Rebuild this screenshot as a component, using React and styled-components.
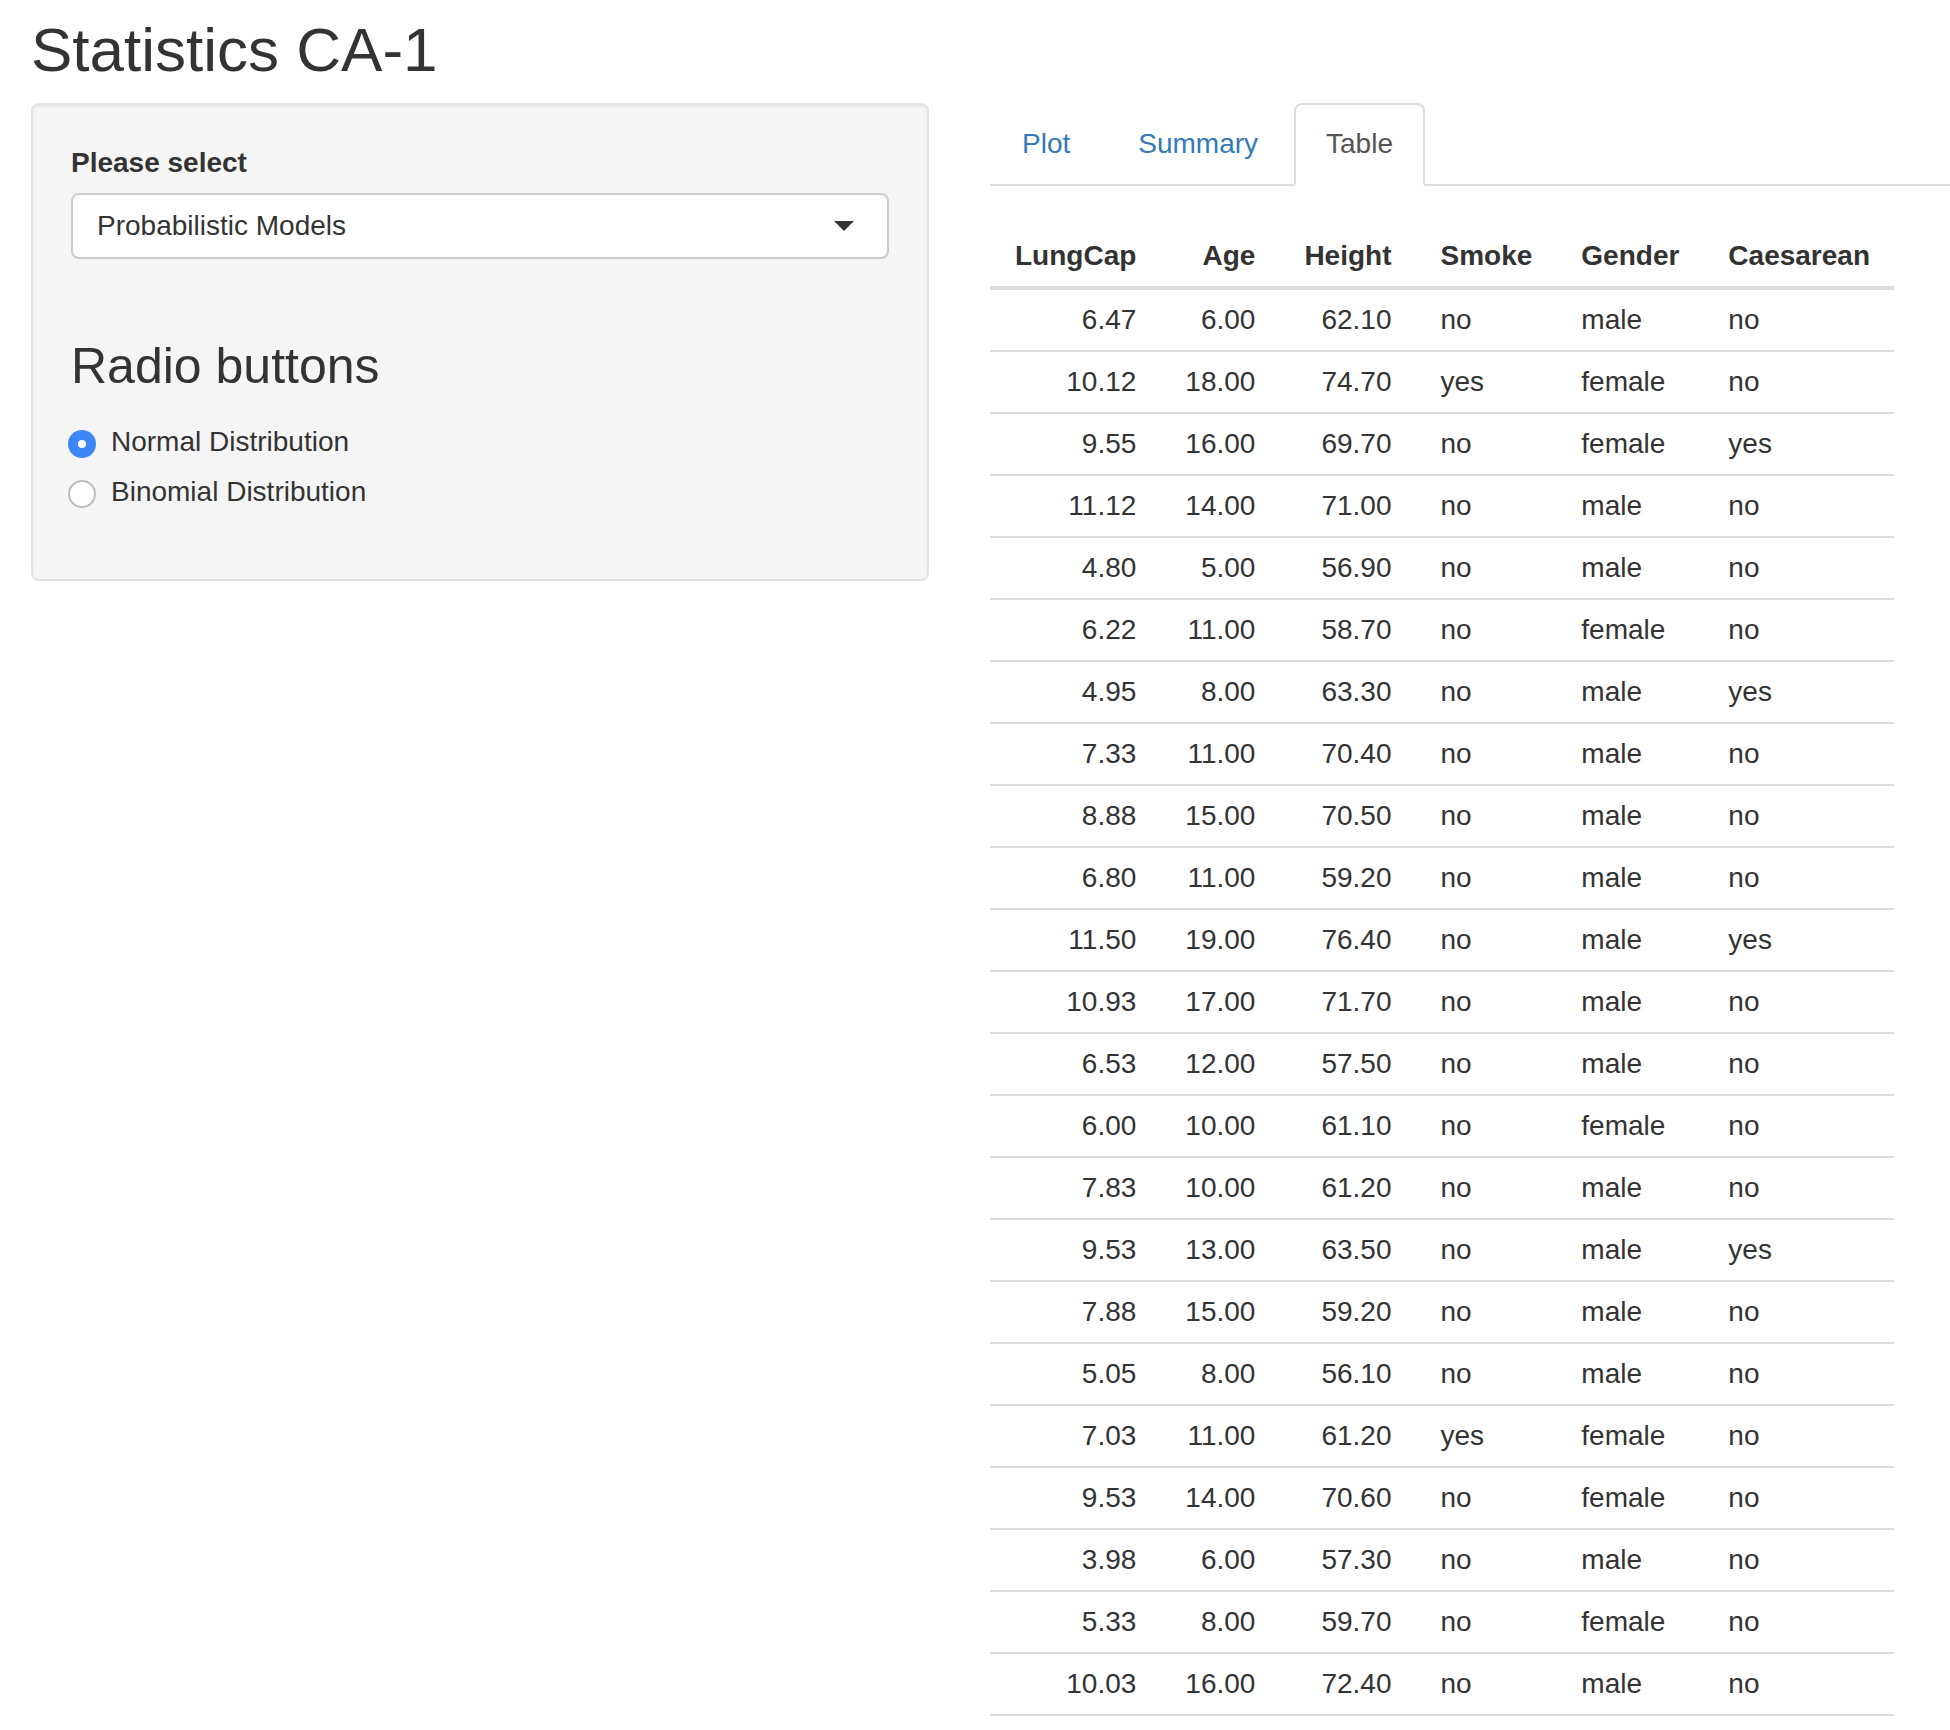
import styled, { createGlobalStyle } from "styled-components";
import { useState } from "react";

const rows = [
  ["6.47", "6.00", "62.10", "no", "male", "no"],
  ["10.12", "18.00", "74.70", "yes", "female", "no"],
  ["9.55", "16.00", "69.70", "no", "female", "yes"],
  ["11.12", "14.00", "71.00", "no", "male", "no"],
  ["4.80", "5.00", "56.90", "no", "male", "no"],
  ["6.22", "11.00", "58.70", "no", "female", "no"],
  ["4.95", "8.00", "63.30", "no", "male", "yes"],
  ["7.33", "11.00", "70.40", "no", "male", "no"],
  ["8.88", "15.00", "70.50", "no", "male", "no"],
  ["6.80", "11.00", "59.20", "no", "male", "no"],
  ["11.50", "19.00", "76.40", "no", "male", "yes"],
  ["10.93", "17.00", "71.70", "no", "male", "no"],
  ["6.53", "12.00", "57.50", "no", "male", "no"],
  ["6.00", "10.00", "61.10", "no", "female", "no"],
  ["7.83", "10.00", "61.20", "no", "male", "no"],
  ["9.53", "13.00", "63.50", "no", "male", "yes"],
  ["7.88", "15.00", "59.20", "no", "male", "no"],
  ["5.05", "8.00", "56.10", "no", "male", "no"],
  ["7.03", "11.00", "61.20", "yes", "female", "no"],
  ["9.53", "14.00", "70.60", "no", "female", "no"],
  ["3.98", "6.00", "57.30", "no", "male", "no"],
  ["5.33", "8.00", "59.70", "no", "female", "no"],
  ["10.03", "16.00", "72.40", "no", "male", "no"],
];

const columns = [
  { name: "LungCap", right: true },
  { name: "Age", right: true },
  { name: "Height", right: true },
  { name: "Smoke" },
  { name: "Gender" },
  { name: "Caesarean" },
];

const tabs = ["Plot", "Summary", "Table"];
const distributions = ["Normal Distribution", "Binomial Distribution"];

export default function App() {
  const [tab, setTab] = useState("Table");
  const [dist, setDist] = useState(distributions[0]);

  return (
    <>
      <GlobalStyle />
      <Page>
        <Title>Statistics CA-1</Title>
        <Layout>
          <Sidebar>
            <Label>Please select</Label>
            <Select>
              <span>Probabilistic Models</span>
              <svg width="20" height="10" viewBox="0 0 20 10">
                <path d="M0 0 L20 0 L10 10 Z" fill="#333" />
              </svg>
            </Select>
            <SectionTitle>Radio buttons</SectionTitle>
            <RadioGroup>
              {distributions.map((d) => (
                <RadioRow key={d} onClick={() => setDist(d)}>
                  <RadioDot checked={dist === d} />
                  {d}
                </RadioRow>
              ))}
            </RadioGroup>
          </Sidebar>
          <Main>
            <TabBar>
              {tabs.map((t) => (
                <Tab key={t} active={t === tab} onClick={() => setTab(t)}>
                  {t}
                </Tab>
              ))}
            </TabBar>
            <Table>
              <thead>
                <tr>
                  {columns.map((c) => (
                    <Th key={c.name} right={c.right}>{c.name}</Th>
                  ))}
                </tr>
              </thead>
              <tbody>
                {rows.map((r, i) => (
                  <tr key={i}>
                    {r.map((v, j) => (
                      <Td key={j} right={columns[j].right}>{v}</Td>
                    ))}
                  </tr>
                ))}
              </tbody>
            </Table>
          </Main>
        </Layout>
      </Page>
    </>
  );
}

const GlobalStyle = createGlobalStyle`
  html, body {
    margin: 0;
    padding: 0;
    background: #fff;
  }
  body {
    font-family: "Liberation Sans", Arial, Helvetica, sans-serif;
    font-size: 28px;
    line-height: 40px;
    color: #333;
  }
`;

const Page = styled.div`
  width: 1950px;
  height: 1730px;
  overflow: hidden;
  padding-left: 31px;
  box-sizing: border-box;
`;

const Title = styled.h2`
  margin: 16px 0 0 0;
  font-size: 62px;
  line-height: 68px;
  font-weight: 500;
  color: #333;
`;

const Layout = styled.div`
  display: flex;
  align-items: flex-start;
  gap: 61px;
  margin-top: 19px;
`;

const Sidebar = styled.div`
  width: 898px;
  box-sizing: border-box;
  background: #f5f5f5;
  border: 2px solid #e3e3e3;
  border-radius: 8px;
  box-shadow: inset 0 2px 2px rgba(0, 0, 0, 0.05);
  padding: 38px;
`;

const Label = styled.div`
  font-weight: 700;
  margin-bottom: 10px;
`;

const Select = styled.div`
  display: flex;
  align-items: center;
  justify-content: space-between;
  height: 66px;
  box-sizing: border-box;
  background: #fff;
  border: 2px solid #cccccc;
  border-radius: 8px;
  padding: 0 33px 0 24px;
  color: #333;
`;

const SectionTitle = styled.h3`
  margin: 80px 0 0 0;
  font-size: 50px;
  line-height: 55px;
  font-weight: 500;
`;

const RadioGroup = styled.div`
  display: flex;
  flex-direction: column;
  gap: 10px;
  margin: 28px 0 29px;
`;

const RadioRow = styled.label`
  display: flex;
  align-items: center;
  gap: 15px;
  margin-left: -3px;
  cursor: pointer;
`;

const RadioDot = styled.span`
  width: 28px;
  height: 28px;
  box-sizing: border-box;
  border-radius: 50%;
  margin-top: 4px;
  position: relative;
  background: ${(p) => (p.checked ? "#3b87f7" : "#fff")};
  border: ${(p) => (p.checked ? "none" : "2px solid #bdbdbd")};
  &::after {
    content: "";
    display: ${(p) => (p.checked ? "block" : "none")};
    position: absolute;
    left: 10px;
    top: 10px;
    width: 8px;
    height: 8px;
    border-radius: 50%;
    background: #fff;
  }
`;

const Main = styled.div`
  flex: 1;
  min-width: 0;
`;

const TabBar = styled.div`
  display: flex;
  border-bottom: 2px solid #ddd;
`;

const Tab = styled.div`
  padding: 19px 30px 20px;
  margin-right: 4px;
  margin-bottom: -2px;
  border: 2px solid ${(p) => (p.active ? "#ddd" : "transparent")};
  border-bottom-color: transparent;
  border-radius: 8px 8px 0 0;
  background: ${(p) => (p.active ? "#fff" : "transparent")};
  color: ${(p) => (p.active ? "#555" : "#337ab7")};
  cursor: pointer;
`;

const Table = styled.table`
  margin-top: 40px;
  border-collapse: separate;
  border-spacing: 0;
`;

const Th = styled.th`
  padding: 10px 24px 10px 25px;
  font-weight: 700;
  text-align: ${(p) => (p.right ? "right" : "left")};
  border-bottom: 4px solid #ddd;
  white-space: nowrap;
`;

const Td = styled.td`
  padding: 10px 24px 10px 25px;
  text-align: ${(p) => (p.right ? "right" : "left")};
  border-bottom: 2px solid #ddd;
  white-space: nowrap;
`;
